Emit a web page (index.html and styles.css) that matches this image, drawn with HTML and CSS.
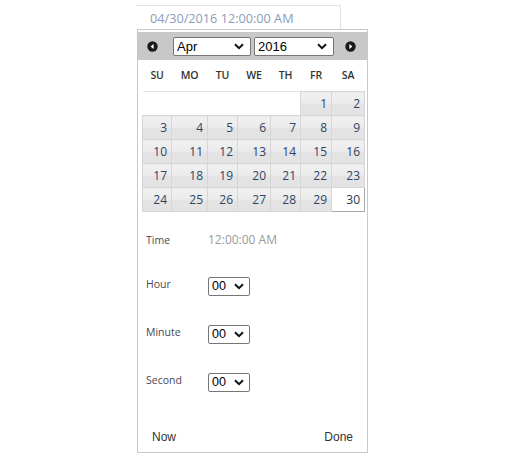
FILE: index.html
```html
<!DOCTYPE html>
<html lang="en">
<head>
<meta charset="utf-8">
<title>Date time picker</title>
<link rel="stylesheet" href="styles.css">
</head>
<body>
<div class="page">
  <div class="field">
    <input class="date-input" type="text" value="04/30/2016 12:00:00 AM">
  </div>
  <div class="picker">
    <div class="picker-header">
      <a class="nav prev" title="Prev">
        <svg width="11" height="11" viewBox="0 0 11 11"><circle cx="5.5" cy="5.5" r="5.2" fill="#1a1a1a"/><path d="M6.6 3 L3.6 5.5 L6.6 8 Z" fill="#fff"/></svg>
      </a>
      <div class="title">
        <span class="select-wrap month">
          <select class="select"><option>Apr</option></select>
          <svg class="chev" width="10" height="7" viewBox="0 0 10 7"><path d="M1 1.2 L5 5.2 L9 1.2" fill="none" stroke="#111" stroke-width="2"/></svg>
        </span>
        <span class="select-wrap year">
          <select class="select"><option>2016</option></select>
          <svg class="chev" width="10" height="7" viewBox="0 0 10 7"><path d="M1 1.2 L5 5.2 L9 1.2" fill="none" stroke="#111" stroke-width="2"/></svg>
        </span>
      </div>
      <a class="nav next" title="Next">
        <svg width="11" height="11" viewBox="0 0 11 11"><circle cx="5.5" cy="5.5" r="5.2" fill="#1a1a1a"/><path d="M4.4 3 L7.4 5.5 L4.4 8 Z" fill="#fff"/></svg>
      </a>
    </div>
    <table class="calendar">
      <colgroup><col class="c1"><col class="c2"><col class="c3"><col class="c4"><col class="c5"><col class="c6"><col class="c7"></colgroup>
      <thead>
        <tr><th>SU</th><th>MO</th><th>TU</th><th>WE</th><th>TH</th><th>FR</th><th>SA</th></tr>
      </thead>
      <tbody>
        <tr><td class="empty"></td><td class="empty"></td><td class="empty"></td><td class="empty"></td><td class="empty"></td><td class="day">1</td><td class="day">2</td></tr>
        <tr><td class="day">3</td><td class="day">4</td><td class="day">5</td><td class="day">6</td><td class="day">7</td><td class="day">8</td><td class="day">9</td></tr>
        <tr><td class="day">10</td><td class="day">11</td><td class="day">12</td><td class="day">13</td><td class="day">14</td><td class="day">15</td><td class="day">16</td></tr>
        <tr><td class="day">17</td><td class="day">18</td><td class="day">19</td><td class="day">20</td><td class="day">21</td><td class="day">22</td><td class="day">23</td></tr>
        <tr><td class="day">24</td><td class="day">25</td><td class="day">26</td><td class="day">27</td><td class="day">28</td><td class="day">29</td><td class="day active">30</td></tr>
      </tbody>
    </table>
    <div class="time">
      <div class="time-row first"><span class="label">Time</span><span class="value">12:00:00 AM</span></div>
      <div class="time-row"><span class="label">Hour</span>
        <span class="select-wrap small"><select class="select"><option>00</option></select><svg class="chev" width="10" height="7" viewBox="0 0 10 7"><path d="M1 1.2 L5 5.2 L9 1.2" fill="none" stroke="#111" stroke-width="2"/></svg></span>
      </div>
      <div class="time-row"><span class="label">Minute</span>
        <span class="select-wrap small"><select class="select"><option>00</option></select><svg class="chev" width="10" height="7" viewBox="0 0 10 7"><path d="M1 1.2 L5 5.2 L9 1.2" fill="none" stroke="#111" stroke-width="2"/></svg></span>
      </div>
      <div class="time-row"><span class="label">Second</span>
        <span class="select-wrap small"><select class="select"><option>00</option></select><svg class="chev" width="10" height="7" viewBox="0 0 10 7"><path d="M1 1.2 L5 5.2 L9 1.2" fill="none" stroke="#111" stroke-width="2"/></svg></span>
      </div>
    </div>
    <div class="buttons">
      <button class="btn" type="button">Now</button>
      <button class="btn" type="button">Done</button>
    </div>
  </div>
</div>
</body>
</html>
```

FILE: styles.css
```css
html, body {
  margin: 0;
  padding: 0;
  background: #fff;
}
body {
  font-family: "Open Sans", "Noto Sans", sans-serif;
  width: 509px;
  height: 456px;
  overflow: hidden;
}
.page {
  position: relative;
  height: 456px;
  padding: 5px 0 0 135px;
  box-sizing: border-box;
}
.field {
  display: flex;
}
.date-input {
  box-sizing: border-box;
  width: 206px;
  height: 30px;
  margin: 0;
  border: 1px solid #e3e3e3;
  border-left-color: #fff;
  padding: 0 0 4px 14px;
  font-family: "Open Sans", "Noto Sans", sans-serif;
  font-size: 12.7px;
  color: #8c9cba;
  outline: none;
}
.picker {
  position: absolute;
  left: 137px;
  top: 29px;
  width: 231px;
  height: 424px;
  box-sizing: border-box;
  border: 1px solid #c8c8c8;
  background: #fff;
  display: flex;
  flex-direction: column;
  padding: 2px 0 0 0;
}
.picker-header {
  height: 28px;
  background: #c8c8c8;
  display: flex;
  align-items: center;
  padding: 0 11px 0 9px;
  box-sizing: border-box;
  flex-shrink: 0;
}
.nav {
  display: flex;
  width: 11px;
  height: 11px;
}
.title {
  flex: 1;
  display: flex;
  justify-content: center;
  gap: 3px;
  padding-left: 4px;
}
.select-wrap {
  position: relative;
  display: inline-flex;
}
.select {
  -webkit-appearance: none;
  appearance: none;
  box-sizing: border-box;
  height: 19px;
  margin: 0;
  border: 1px solid #767676;
  border-radius: 2px;
  background: #fff;
  font-family: "Liberation Sans", Arial, sans-serif;
  font-size: 13px;
  color: #000;
  padding: 0 0 0 3px;
  line-height: 17px;
}
.month .select { width: 78px; }
.year .select { width: 80px; }
.chev {
  position: absolute;
  right: 7px;
  top: 6px;
  pointer-events: none;
}
.calendar {
  border-collapse: collapse;
  width: 222px;
  margin: 0 0 0 4px;
  table-layout: fixed;
}
.c1 { width: 29px; }
.c2 { width: 36px; }
.c3 { width: 30px; }
.c4 { width: 33px; }
.c5 { width: 30px; }
.c6 { width: 31px; }
.c7 { width: 33px; }
.calendar th {
  height: 30px;
  padding: 0 0 1px 0;
  font-size: 10.5px;
  font-weight: 600;
  color: #333;
  text-align: center;
  letter-spacing: -0.2px;
}
.calendar td {
  height: 24px;
  padding: 0;
  box-sizing: border-box;
}
.calendar .empty {
  border-top: 1px solid #e4e4e4;
}
.calendar .day {
  border: 1px solid #d6d6d6;
  background: linear-gradient(#f1f1f1 0%, #ebebeb 45%, #e3e3e3 55%, #e3e3e3 100%);
  text-align: right;
  padding-right: 4px;
  font-size: 12px;
  color: #2f4466;
}
.calendar .day.active {
  background: #fff;
  border: 1px solid #a8a8a8;
  color: #2a3a55;
}
.time {
  display: flex;
  flex-direction: column;
  padding: 19px 0 0 8px;
}
.time-row {
  display: flex;
  align-items: flex-start;
  height: 48px;
}
.time-row.first {
  height: 44px;
}
.label {
  width: 62px;
  font-size: 10.5px;
  line-height: 18px;
  color: #4c4654;
}
.value {
  font-size: 12px;
  line-height: 18px;
  color: #9a9a9a;
}
.small {
  margin-top: 2px;
}
.small .select {
  width: 42px;
  padding-left: 3px;
  font-size: 12.5px;
}
.small .chev {
  right: 6px;
  top: 6px;
}
.buttons {
  margin-top: auto;
  display: flex;
  justify-content: space-between;
  padding: 0 14px 7px 14px;
}
.btn {
  border: none;
  background: none;
  padding: 0;
  font-family: "Liberation Sans", Arial, sans-serif;
  font-size: 12px;
  color: #333;
  line-height: 16px;
}
```
